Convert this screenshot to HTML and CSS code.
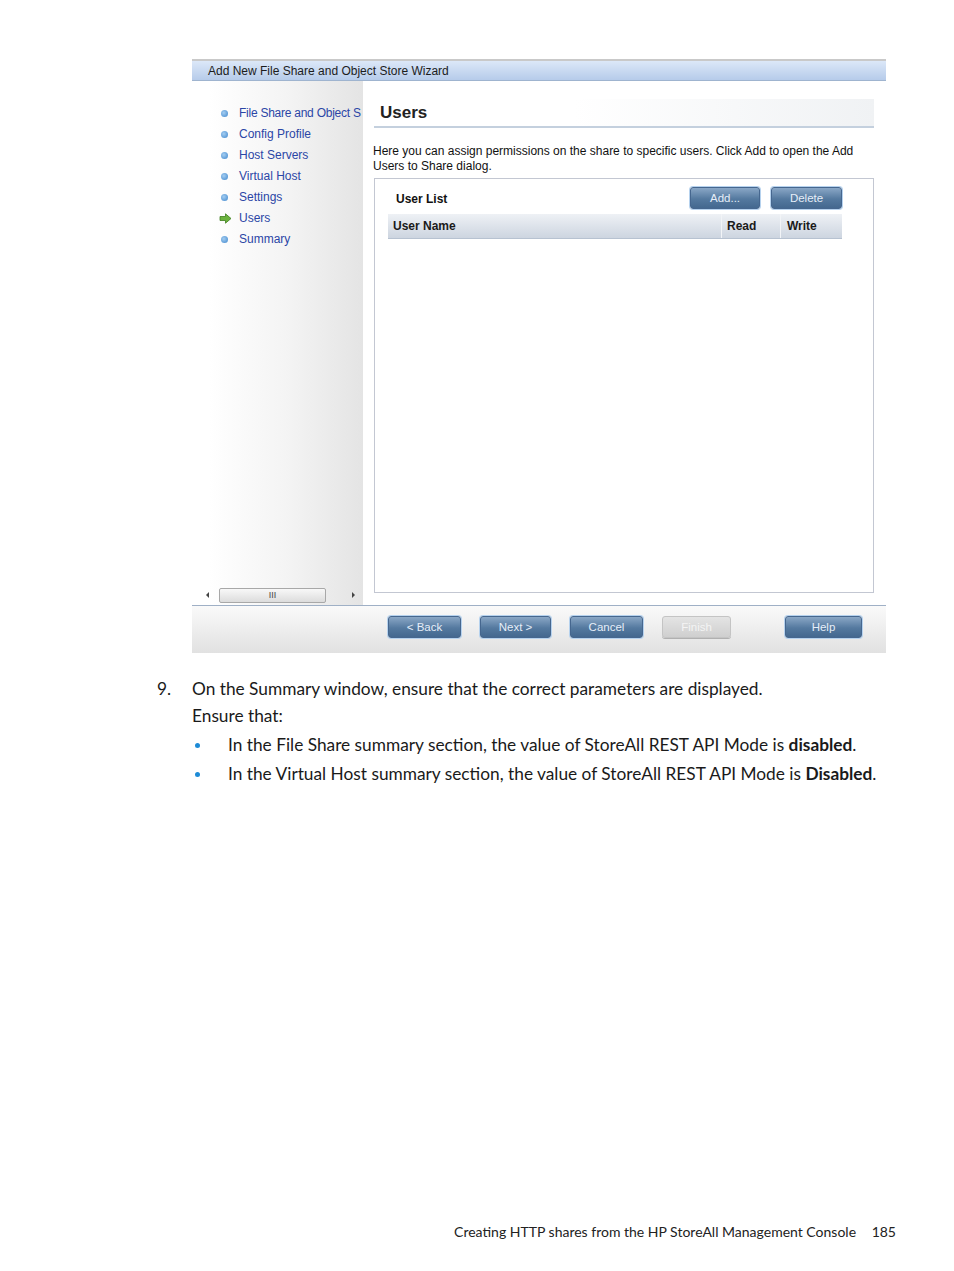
FILE: index.html
```html
<!DOCTYPE html>
<html lang="en">
<head>
    <meta charset="UTF-8">
    <title>Creating HTTP shares - 185</title>
    <link rel="stylesheet" href="styles.css">
</head>
<body>
<div id="wrap">
    <div class="wizard">
        <div class="wiz_title">Add New File Share and Object Store Wizard</div>
        <div class="wiz_main">
            <div class="nav">
                <ul class="steps">
                    <li class="long"><span class="dot"></span>File Share and Object S</li>
                    <li><span class="dot"></span>Config Profile</li>
                    <li><span class="dot"></span>Host Servers</li>
                    <li><span class="dot"></span>Virtual Host</li>
                    <li><span class="dot"></span>Settings</li>
                    <li class="cur">
                        <svg class="arrow" width="13" height="11" viewBox="0 0 13 11">
                            <path d="M1 3.5h5.5V0.8L12 5.5 6.5 10.2V7.5H1z" fill="#6cb33e" stroke="#3f7f1f" stroke-width="0.8"/>
                        </svg>Users</li>
                    <li><span class="dot"></span>Summary</li>
                </ul>
                <div class="hscroll">
                    <span class="sc_arrow left"></span>
                    <span class="thumb">III</span>
                    <span class="sc_arrow right"></span>
                </div>
            </div>
            <div class="content">
                <div class="content_head"><h2>Users</h2></div>
                <p class="desc">Here you can assign permissions on the share to specific users. Click Add to open the Add Users to Share dialog.</p>
                <div class="list_box">
                    <div class="list_bar">
                        <span class="list_name">User List</span>
                        <span class="btn">Add...</span>
                        <span class="btn">Delete</span>
                    </div>
                    <div class="table_head">
                        <span class="col col_name">User Name</span>
                        <span class="col col_read">Read</span>
                        <span class="col col_write">Write</span>
                    </div>
                </div>
            </div>
        </div>
        <div class="wiz_buttons">
            <span class="btn b_back">&lt; Back</span>
            <span class="btn b_next">Next &gt;</span>
            <span class="btn b_cancel">Cancel</span>
            <span class="btn b_finish off">Finish</span>
            <span class="btn b_help">Help</span>
        </div>
    </div>

    <div class="step_text">
        <span class="num">9.</span>
        <div class="step_body">
            <p>On the Summary window, ensure that the correct parameters are displayed.</p>
            <p>Ensure that:</p>
            <ul class="bullets">
                <li>In the File Share summary section, the value of StoreAll REST API Mode is <b>disabled</b>.</li>
                <li>In the Virtual Host summary section, the value of StoreAll REST API Mode is <b>Disabled</b>.</li>
            </ul>
        </div>
    </div>

    <div class="footer">
        <span>Creating HTTP shares from the HP StoreAll Management Console</span>
        <span class="page_num">185</span>
    </div>
</div>
</body>
</html>
```

FILE: styles.css
```css
body, div, ul, li, p, h2, span {
    margin: 0;
    padding: 0;
}

ul, li {
    list-style-type: none;
}

body {
    background: #fff;
    font-family: "Liberation Sans", Arial, sans-serif;
    color: #111;
}

#wrap {
    width: 954px;
    height: 1271px;
    display: flex;
    flex-direction: column;
    overflow: hidden;
}

/* wizard window */
.wizard {
    margin: 59px 0 0 192px;
    width: 694px;
}

.wiz_title {
    height: 19px;
    line-height: 20px;
    padding-left: 16px;
    border-top: 2px solid #c9c9c9;
    border-bottom: 1px solid #9fb4cf;
    background: linear-gradient(#dce8f8, #b6cbea);
    font-size: 12px;
    color: #1c1c1c;
}

.wiz_main {
    display: flex;
    height: 524px;
    border-bottom: 1px solid #9fb0c6;
}

.nav {
    width: 171px;
    display: flex;
    flex-direction: column;
    overflow: hidden;
    background: linear-gradient(to right, #ffffff 10%, #f4f4f4 55%, #e4e4e4 100%);
}

.steps {
    padding-top: 22px;
    padding-left: 28px;
}

.steps li {
    height: 21px;
    line-height: 21px;
    font-size: 12px;
    color: #2b46a6;
    white-space: nowrap;
    display: flex;
    align-items: center;
}

.steps li.long {
    letter-spacing: -0.25px;
}

.steps .dot {
    flex-shrink: 0;
    width: 7px;
    height: 7px;
    margin: 0 11px 0 1px;
    border-radius: 50%;
    background: radial-gradient(circle at 40% 40%, #a4cef2, #3f86cc);
}

.steps .arrow {
    flex-shrink: 0;
    margin: 0 7px 0 -1px;
}

.hscroll {
    margin: auto 3px 2px 7px;
    height: 16px;
    display: flex;
    align-items: center;
}

.sc_arrow {
    width: 0;
    height: 0;
    border-top: 3px solid transparent;
    border-bottom: 3px solid transparent;
}

.sc_arrow.left {
    margin: 0 10px 0 7px;
    border-right: 3px solid #444;
}

.sc_arrow.right {
    margin: 0 5px 0 auto;
    border-left: 3px solid #444;
}

.thumb {
    width: 105px;
    height: 13px;
    line-height: 12px;
    text-align: center;
    font-size: 9px;
    color: #444;
    border: 1px solid #a8a8a8;
    border-radius: 2px;
    background: linear-gradient(#f8f8f8, #dcdcdc);
}

.content {
    flex: 1;
    display: flex;
    flex-direction: column;
}

.content_head {
    margin: 18px 12px 0 11px;
    height: 27px;
    border-bottom: 2px solid #c4d0de;
    background: linear-gradient(to right, #ffffff 40%, #f0f2f4);
}

.content_head h2 {
    padding-left: 6px;
    line-height: 27px;
    font-size: 17px;
    font-weight: bold;
    color: #222;
}

.desc {
    margin: 16px 20px 0 10px;
    font-size: 12px;
    line-height: 15px;
    color: #111;
}

.list_box {
    margin: 4px 12px 0 11px;
    height: 413px;
    border: 1px solid #c3c7d2;
}

.list_bar {
    display: flex;
    align-items: center;
    margin: 8px 31px 0 0;
    height: 21px;
}

.list_name {
    margin: 2px auto 0 21px;
    font-size: 12px;
    font-weight: bold;
    color: #111;
}

.btn {
    display: inline-block;
    height: 20px;
    line-height: 20px;
    text-align: center;
    font-size: 11.5px;
    color: #e6eef8;
    border: 1px solid #46678f;
    border-radius: 3px;
    background: linear-gradient(#8aa7c6, #54799f 55%, #44688f);
    box-shadow: 0 0 0 1px #b6d2ee;
}

.list_bar .btn {
    width: 68px;
}

.list_bar .btn + .btn {
    margin-left: 11px;
    width: 69px;
}

.table_head {
    display: flex;
    margin: 6px 31px 0 13px;
    height: 24px;
    background: linear-gradient(#eef1f5, #cdd5e0);
    border-bottom: 1px solid #b7c2d1;
}

.col {
    line-height: 25px;
    font-size: 12px;
    font-weight: bold;
    color: #1a1a1a;
    padding-left: 5px;
}

.col_name {
    width: 328px;
}

.col_read {
    width: 53px;
    border-left: 1px solid #f2f4f7;
}

.col_write {
    flex: 1;
    border-left: 1px solid #f2f4f7;
    padding-left: 6px;
}

.wiz_buttons {
    height: 47px;
    display: flex;
    align-items: flex-start;
    padding: 10px 0 0 196px;
    box-sizing: border-box;
    background: linear-gradient(#fafafa, #e1e1e1);
}

.wiz_buttons .btn {
    height: 20px;
}

.b_back { width: 71px; }
.b_next { width: 69px; margin-left: 19px; }
.b_cancel { width: 71px; margin-left: 19px; }
.b_finish { width: 67px; margin-left: 19px; }
.b_help { width: 75px; margin-left: 54px; }

.btn.off {
    color: #f4f4f4;
    border-color: #c4c4c4;
    background: linear-gradient(#e4e4e4, #cfcfcf);
    box-shadow: 0 1px 0 0 #b0b0b0;
}

/* document text */
.step_text {
    display: flex;
    margin-top: 22px;
    font-family: "Lato", "Liberation Sans", sans-serif;
    font-size: 17.3px;
    line-height: 27px;
    color: #1a1a1a;
}

.step_text .num {
    width: 35px;
    margin-left: 157px;
}

.bullets {
    margin-top: 1px;
}

.bullets li {
    position: relative;
    padding-left: 36px;
    line-height: 29px;
}

.bullets li:before {
    content: "";
    position: absolute;
    left: 3px;
    top: 13px;
    width: 5px;
    height: 5px;
    border-radius: 50%;
    background: #1d8bd6;
}

.footer {
    margin: auto 58px 31px 0;
    align-self: flex-end;
    font-family: "Lato", "Liberation Sans", sans-serif;
    font-size: 14px;
    line-height: 17px;
    color: #222;
    white-space: nowrap;
}

.page_num {
    margin-left: 12px;
}
```
